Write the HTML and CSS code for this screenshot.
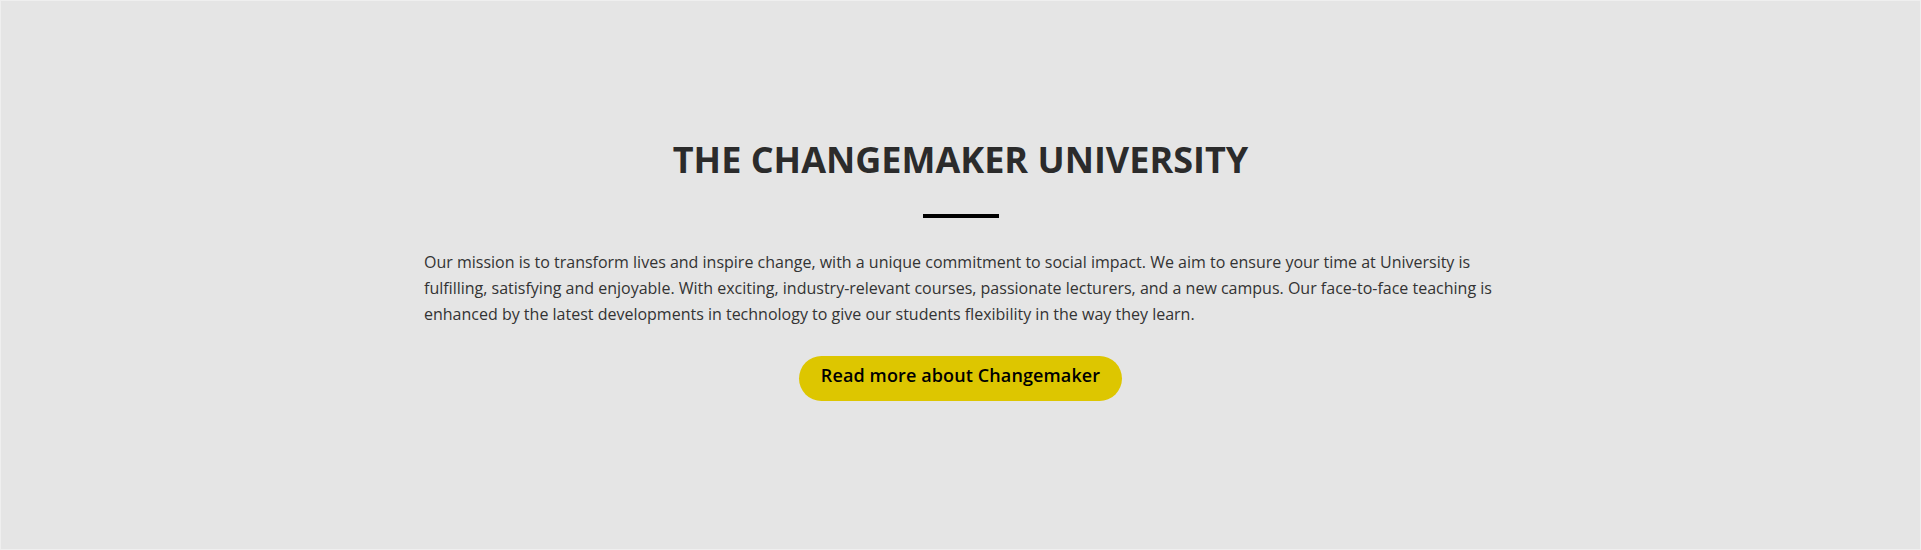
FILE: index.html
```html
<!DOCTYPE html>
<html lang="en">
<head>
<meta charset="utf-8">
<title>The Changemaker University</title>
<link rel="stylesheet" href="styles.css">
</head>
<body>
<section class="intro">
  <h2 class="intro-title">THE CHANGEMAKER UNIVERSITY</h2>
  <span class="intro-rule"></span>
  <p class="intro-text">Our mission is to transform lives and inspire change, with a unique commitment to social impact. We aim to ensure your time at University is fulfilling, satisfying and enjoyable. With exciting, industry-relevant courses, passionate lecturers, and a new campus. Our face-to-face teaching is enhanced by the latest developments in technology to give our students flexibility in the way they learn.</p>
  <a class="intro-button" href="#">Read more about Changemaker</a>
</section>
</body>
</html>
```
FILE: styles.css
```css
html, body {
  margin: 0;
  padding: 0;
}

body {
  font-family: "Open Sans", "Noto Sans", sans-serif;
  background: #e5e5e5;
}

.intro {
  box-sizing: border-box;
  height: 550px;
  border: 1px solid #efefef;
  background: #e5e5e5;
  display: flex;
  flex-direction: column;
  align-items: center;
  padding-top: 137px;
}

.intro-title {
  margin: 0;
  font-size: 36px;
  line-height: 43px;
  font-weight: 700;
  color: #2b2b2b;
}

.intro-rule {
  display: block;
  width: 76px;
  height: 4px;
  background: #000;
  margin-top: 33px;
}

.intro-text {
  width: 1073px;
  margin: 31px 0 0;
  font-size: 16px;
  line-height: 26px;
  color: #333;
}

.intro-button {
  display: inline-block;
  margin-top: 29px;
  padding: 7px 22px 13px;
  font-size: 18px;
  line-height: 25px;
  font-weight: 600;
  letter-spacing: 0.12px;
  color: #000;
  background: #ddc600;
  border-radius: 23px;
  text-decoration: none;
}
```
